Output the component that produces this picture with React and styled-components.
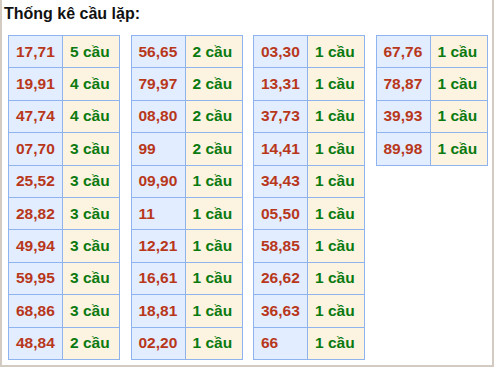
import React from 'react';
import styled, { createGlobalStyle } from 'styled-components';

const GlobalStyle = createGlobalStyle`
  body {
    margin: 0;
    background: #fff;
    font-family: "Liberation Sans", Arial, sans-serif;
  }
`;

const Page = styled.div`
  box-sizing: border-box;
  width: 494px;
  height: 367px;
  border: 2px solid #d3cbc1;
  border-top: none;
  padding-top: 4px;
`;

const Title = styled.h3`
  margin: 0;
  padding-left: 2px;
  font-size: 16px;
  font-weight: bold;
  color: #111;
  line-height: 20px;
`;

const Tables = styled.div`
  display: flex;
  align-items: flex-start;
  gap: 10.5px;
  margin-top: 11px;
  padding-left: 6px;
`;

const Table = styled.table`
  border-collapse: collapse;
  width: 112px;
  table-layout: fixed;
`;

const Cell = styled.td`
  border: 1px solid #8fb3ee;
  height: 31.4px;
  padding: 0 0 0 7px;
  font-size: 15.5px;
  font-weight: bold;
  white-space: nowrap;
  background: ${(p) => (p.$count ? '#fdf3e1' : '#e2edff')};
  color: ${(p) => (p.$count ? '#0a7a10' : '#b8371b')};
  width: ${(p) => (p.$count ? '49px' : '46px')};
`;

const groups = [
  [['17,71', 5], ['19,91', 4], ['47,74', 4], ['07,70', 3], ['25,52', 3], ['28,82', 3], ['49,94', 3], ['59,95', 3], ['68,86', 3], ['48,84', 2]],
  [['56,65', 2], ['79,97', 2], ['08,80', 2], ['99', 2], ['09,90', 1], ['11', 1], ['12,21', 1], ['16,61', 1], ['18,81', 1], ['02,20', 1]],
  [['03,30', 1], ['13,31', 1], ['37,73', 1], ['14,41', 1], ['34,43', 1], ['05,50', 1], ['58,85', 1], ['26,62', 1], ['36,63', 1], ['66', 1]],
  [['67,76', 1], ['78,87', 1], ['39,93', 1], ['89,98', 1]],
];

const App = () => (
  <Page>
    <GlobalStyle />
    <Title>Thống kê cầu lặp:</Title>
    <Tables>
      {groups.map((rows, i) => (
        <Table key={ i }>
          <tbody>
            {rows.map(([pair, n]) => (
              <tr key={ pair }>
                <Cell>{pair}</Cell>
                <Cell $count>{n} cầu</Cell>
              </tr>
            ))}
          </tbody>
        </Table>
      ))}
    </Tables>
  </Page>
);

export default App;
